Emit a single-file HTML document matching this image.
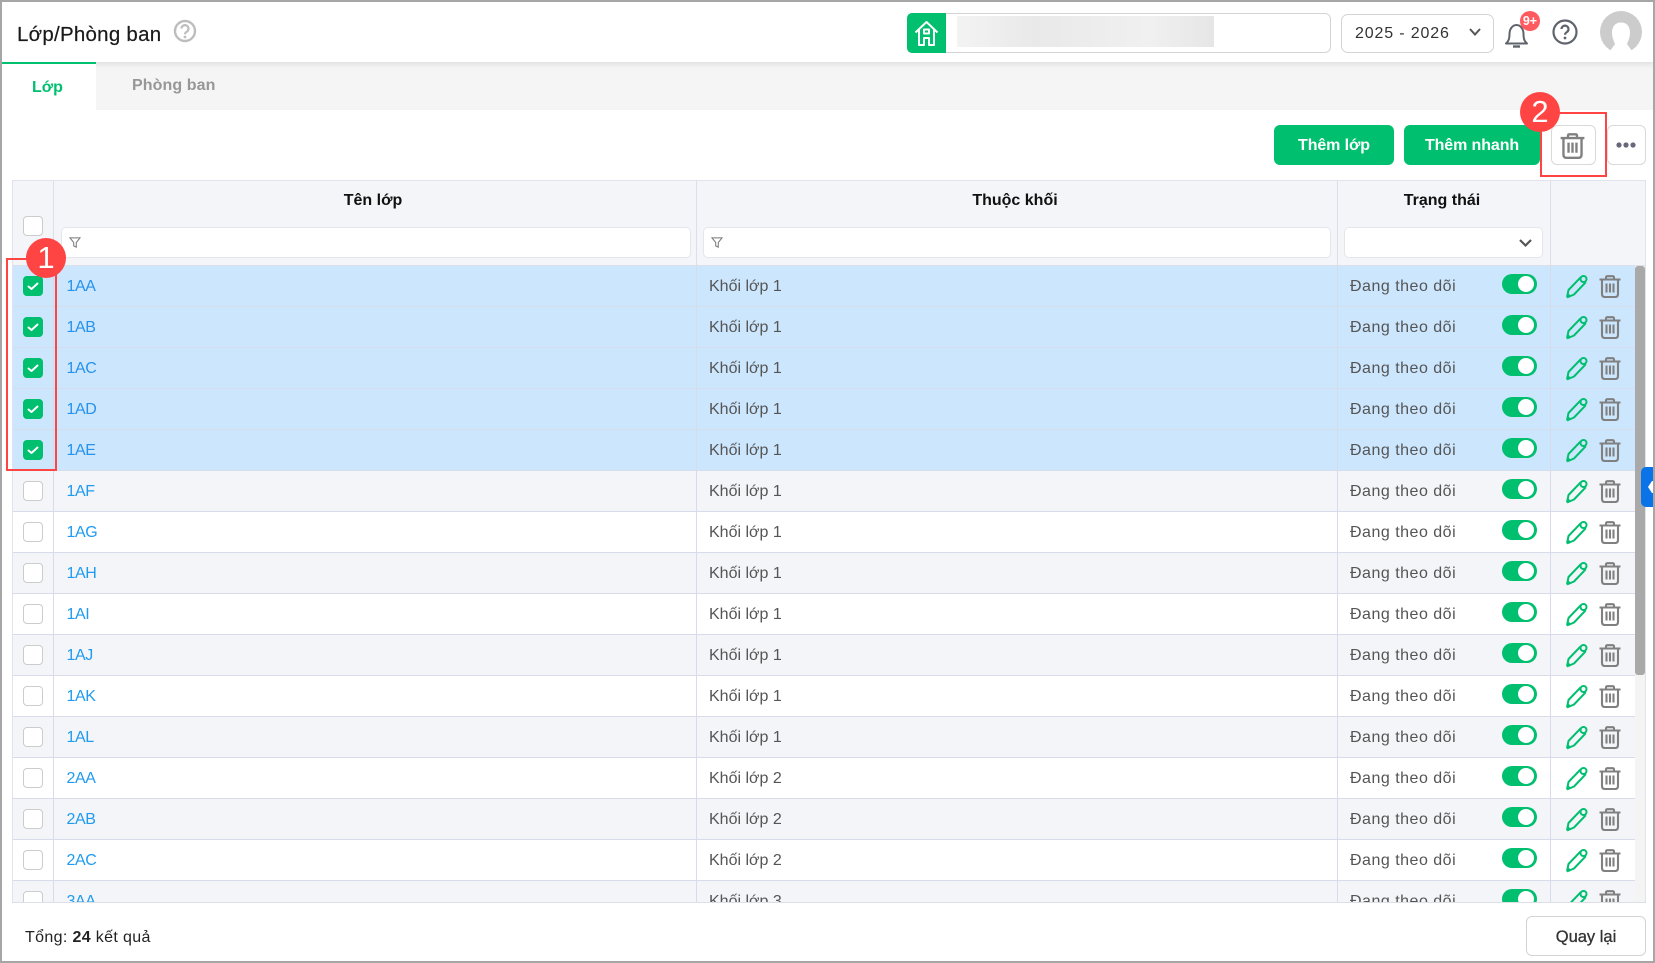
<!DOCTYPE html>
<html><head><meta charset="utf-8"><title>Lớp/Phòng ban</title>
<style>
*{box-sizing:border-box}
html,body{margin:0;padding:0}
body{width:1655px;height:963px;position:relative;overflow:hidden;background:#fff;font-family:"Liberation Sans",sans-serif;font-size:16px;color:#222}
.a{position:absolute}
.frame{position:absolute;left:0;top:0;width:1655px;height:963px;border:2px solid #a6a6a6;pointer-events:none;z-index:20}
.hdr{position:absolute;left:0;top:0;width:1655px;height:62px;background:#fff;box-shadow:0 2px 6px rgba(0,0,0,.1);z-index:3}
.tabs{position:absolute;left:0;top:62px;width:1655px;height:48px;background:#f5f5f5}
.tab{position:absolute;left:2px;top:62px;width:94px;height:48px;background:#fff;border-top:2px solid #00bf6f;z-index:4}
.btn{position:absolute;top:125px;height:40px;border-radius:6px;background:#00bf6f;color:#fff;font-weight:700;text-align:center;line-height:42px;font-size:16px;letter-spacing:-.1px}
.ob{position:absolute;top:125px;height:40px;border:1px solid #d9d9d9;border-radius:6px;background:#fff}
.th{position:absolute;left:12px;top:180px;width:1634px;height:86px;background:#f3f5f9;border:1px solid #e0e3ec;border-bottom:1px solid #dcdfe8}
.vd{position:absolute;top:180px;width:1px;height:86px;background:#dcdfe9}
.tt{position:absolute;top:191px;font-weight:700;font-size:16px;color:#111;text-align:center;line-height:20px;letter-spacing:0}
.in{position:absolute;top:227px;height:31px;background:#fff;border:1px solid #e4e6eb;border-radius:5px}
.rows{position:absolute;left:13px;top:266px;width:1622px;height:636px;overflow:hidden;background:#fff;border-bottom:0}
.r{position:absolute;left:0;width:1622px;height:41px;border-bottom:1px solid #d8dcea;background:#fff;color:#555}
.r.g{background:#f3f5f9}
.r.s{background:#cce6fd;border-bottom-color:#d6deee}
.r:before,.r:after{content:"";position:absolute;top:0;height:41px;width:1px;background:#d8dcea}
.r:before{left:40px}.r:after{left:1324px}
.d2{position:absolute;left:683px;top:0;height:41px;width:1px;background:#d8dcea}
.d3{position:absolute;left:1537px;top:0;height:41px;width:1px;background:#d8dcea}
.c{position:absolute;left:10px;top:10px;width:20px;height:20px;border:1px solid #ccc;border-radius:4px;background:#fff}
.k{background:#00bf6f;border-color:#00bf6f}
.k svg{position:absolute;left:2px;top:3px}
.n{position:absolute;left:53.5px;top:11px;line-height:20px;color:#1f9bf0;letter-spacing:-.4px}
.s .n{color:#2692ec}
.m{position:absolute;left:696px;top:11px;line-height:20px;letter-spacing:0}
.m2{position:absolute;left:1337px;top:11px;line-height:20px;letter-spacing:.5px}
.t{position:absolute;left:1489px;top:8px;width:35px;height:20px;border-radius:10px;background:#00bf6f}
.t:after{content:"";position:absolute;right:3px;top:2px;width:16px;height:16px;border-radius:50%;background:#fff}
.p{position:absolute;left:1552px;top:8px}
.x{position:absolute;left:1585.5px;top:9px}
.red{position:absolute;border:2px solid #f44;z-index:10}
.bd{position:absolute;width:40px;height:40px;border-radius:50%;background:#f44;color:#fff;text-align:center;line-height:40px;font-size:31px;z-index:11}
</style></head>
<body>
<svg width="0" height="0" style="position:absolute">
<symbol id="pen" viewBox="0 0 24 25"><path d="M2 23.500L3.500 16L15.800 3.200M20.800 8.200L9 20.500L2 23.500" fill="none" stroke="#00bf6f" stroke-width="2" stroke-linejoin="round"/><circle cx="18.500" cy="5" r="3" fill="none" stroke="#00bf6f" stroke-width="2"/><path d="M2 23.500L3.500 19.500L6 22Z" fill="#00bf6f"/></symbol>
<symbol id="tr" viewBox="0 0 22 23"><path d="M.5 4.500H21.500M7 4.500V2.500Q7 1.200 8.500 1.200H13.500Q15 1.200 15 2.500V4.500M3 4.500V19Q3 22 6 22H16Q19 22 19 19V4.500M7.500 8.500V17.500M11 8.500V17.500M14.500 8.500V17.500" fill="none" stroke="#808080" stroke-width="2.100"/></symbol>
<symbol id="ck" viewBox="0 0 14 12"><path d="M2.500 6.500L5.500 9L11.500 3.500" fill="none" stroke="#fff" stroke-width="2" stroke-linecap="round" stroke-linejoin="round"/></symbol>
</svg>

<div class="hdr">
<div class="a" style="left:17px;top:22px;font-size:20.500px;line-height:26px;color:#1a1a1a;letter-spacing:.25px;-webkit-text-stroke:.2px #1a1a1a">Lớp/Phòng ban</div>
<svg class="a" style="left:173px;top:19px" width="24" height="24" viewBox="0 0 24 24"><circle cx="12" cy="12" r="10" fill="none" stroke="#bdbdbd" stroke-width="2.400"/><path d="M8.500 9.500a3.500 3.500 0 1 1 5.500 3c-1.300.8-2 1.300-2 2.800" fill="none" stroke="#bdbdbd" stroke-width="2.200"/><circle cx="12" cy="18" r="1.400" fill="#bdbdbd"/></svg>

<div class="a" style="left:907px;top:13px;width:424px;height:40px;border:1px solid #d4d4d4;border-radius:6px;background:#fff"></div>
<div class="a" style="left:907px;top:13px;width:39px;height:40px;background:#00bf6f;border-radius:5px 0 0 5px"></div>
<svg class="a" style="left:914px;top:20px" width="25" height="27" viewBox="0 0 25 27"><path d="M1.500 12.500L12.500 2L23.500 12.500M5 9.500V25H10V18H15V25H20V9.500M10 9.500H15V13.500H10Z" fill="none" stroke="#fff" stroke-width="2" stroke-linejoin="round"/></svg>
<div class="a" style="left:957px;top:16px;width:257px;height:31px;background:linear-gradient(90deg,#f3f3f3,#e9e9e9 30%,#ededed 55%,#f0f0f0 75%,#e6e6e6)"></div>

<div class="a" style="left:1341px;top:14px;width:153px;height:39px;border:1px solid #d4d4d4;border-radius:7px;background:#fff"></div>
<div class="a" style="left:1355px;top:24px;line-height:20px;font-size:16px;color:#333;letter-spacing:.85px">2025 - 2026</div>
<svg class="a" style="left:1468px;top:27px" width="14" height="10" viewBox="0 0 14 10"><path d="M2 2L7 7.500L12 2" fill="none" stroke="#555" stroke-width="2"/></svg>

<svg class="a" style="left:1503px;top:20px" width="27" height="30" viewBox="0 0 27 30"><path d="M3 23.500H24C21 21 20.500 18 20.500 14C20.500 9 17.500 5 13.500 5C9.500 5 6.500 9 6.500 14C6.500 18 6 21 3 23.500Z" fill="none" stroke="#5f646c" stroke-width="2" stroke-linejoin="round"/><path d="M10 26.500H17" stroke="#5f646c" stroke-width="2.400"/></svg>
<div class="a" style="left:1520px;top:11px;width:20px;height:20px;border-radius:50%;background:#ff5a5f;color:#fff;font-size:12.500px;font-weight:700;text-align:center;line-height:20px">9+</div>
<svg class="a" style="left:1552px;top:19px" width="26" height="26" viewBox="0 0 26 26"><circle cx="13" cy="13" r="11.500" fill="none" stroke="#5f646c" stroke-width="2.200"/><path d="M9.500 10a3.500 3.500 0 1 1 5.500 3c-1.300.8-2 1.300-2 2.800" fill="none" stroke="#5f646c" stroke-width="2.200"/><circle cx="13" cy="19" r="1.400" fill="#5f646c"/></svg>
<svg class="a" style="left:1600px;top:11px" width="42" height="42" viewBox="0 0 42 42"><circle cx="21" cy="21" r="21" fill="#ccc"/><path d="M12 22C12 15 15.500 11.500 21 11.500S30 15 30 22C30 27 28 30 27 33L32 40Q27 44 21 44T10 40L15 33C14 30 12 27 12 22Z" fill="#fff"/></svg>
</div>

<div class="tabs"></div>
<div class="tab"></div>
<div class="a" style="left:32px;top:78px;z-index:5;line-height:20px;color:#00bf6f;font-weight:700;font-size:16px">Lớp</div>
<div class="a" style="left:132px;top:76px;line-height:20px;color:#979797;font-weight:700;font-size:16px;letter-spacing:.1px">Phòng ban</div>

<div class="btn" style="left:1274px;width:120px">Thêm lớp</div>
<div class="btn" style="left:1404px;width:136px">Thêm nhanh</div>
<div class="ob" style="left:1551px;width:45px"><svg class="a" style="left:8px;top:7px" width="25" height="26"><use href="#tr"/></svg></div>
<div class="ob" style="left:1607px;width:39px"><svg class="a" style="left:7px;top:15px" width="22" height="8" viewBox="0 0 22 8"><circle cx="4" cy="4" r="2.600" fill="#66677a"/><circle cx="11" cy="4" r="2.600" fill="#66677a"/><circle cx="18" cy="4" r="2.600" fill="#66677a"/></svg></div>

<div class="th"></div>
<div class="vd" style="left:53px"></div><div class="vd" style="left:696px"></div><div class="vd" style="left:1337px"></div><div class="vd" style="left:1550px"></div>
<div class="tt" style="left:53px;width:640px">Tên lớp</div>
<div class="tt" style="left:696px;width:638px">Thuộc khối</div>
<div class="tt" style="left:1338px;width:208px">Trạng thái</div>
<div class="c" style="left:23px;top:216px"></div>
<div class="in" style="left:61px;width:630px"></div>
<div class="in" style="left:703px;width:628px"></div>
<div class="in" style="left:1344px;width:199px"></div>
<svg class="a" style="left:69px;top:237px" width="12" height="11" viewBox="0 0 14 13"><path d="M1 1H13L8.500 6.500V12L5.500 10.500V6.500Z" fill="none" stroke="#777" stroke-width="1.200"/></svg>
<svg class="a" style="left:711px;top:237px" width="12" height="11" viewBox="0 0 14 13"><path d="M1 1H13L8.500 6.500V12L5.500 10.500V6.500Z" fill="none" stroke="#777" stroke-width="1.200"/></svg>
<svg class="a" style="left:1518px;top:238px" width="15" height="10" viewBox="0 0 15 10"><path d="M2 2L7.500 7.500L13 2" fill="none" stroke="#555" stroke-width="2.200"/></svg>

<div class="rows">
<div class="r s" style="top:0"><i class="d2"></i><i class="d3"></i><i class="c k"><svg width="14" height="12"><use href="#ck"/></svg></i><span class="n">1AA</span><span class="m">Khối lớp 1</span><span class="m2">Đang theo dõi</span><i class="t"></i><svg class="p" width="24" height="25"><use href="#pen"/></svg><svg class="x" width="22" height="23"><use href="#tr"/></svg></div>
<div class="r s" style="top:41px"><i class="d2"></i><i class="d3"></i><i class="c k"><svg width="14" height="12"><use href="#ck"/></svg></i><span class="n">1AB</span><span class="m">Khối lớp 1</span><span class="m2">Đang theo dõi</span><i class="t"></i><svg class="p" width="24" height="25"><use href="#pen"/></svg><svg class="x" width="22" height="23"><use href="#tr"/></svg></div>
<div class="r s" style="top:82px"><i class="d2"></i><i class="d3"></i><i class="c k"><svg width="14" height="12"><use href="#ck"/></svg></i><span class="n">1AC</span><span class="m">Khối lớp 1</span><span class="m2">Đang theo dõi</span><i class="t"></i><svg class="p" width="24" height="25"><use href="#pen"/></svg><svg class="x" width="22" height="23"><use href="#tr"/></svg></div>
<div class="r s" style="top:123px"><i class="d2"></i><i class="d3"></i><i class="c k"><svg width="14" height="12"><use href="#ck"/></svg></i><span class="n">1AD</span><span class="m">Khối lớp 1</span><span class="m2">Đang theo dõi</span><i class="t"></i><svg class="p" width="24" height="25"><use href="#pen"/></svg><svg class="x" width="22" height="23"><use href="#tr"/></svg></div>
<div class="r s" style="top:164px"><i class="d2"></i><i class="d3"></i><i class="c k"><svg width="14" height="12"><use href="#ck"/></svg></i><span class="n">1AE</span><span class="m">Khối lớp 1</span><span class="m2">Đang theo dõi</span><i class="t"></i><svg class="p" width="24" height="25"><use href="#pen"/></svg><svg class="x" width="22" height="23"><use href="#tr"/></svg></div>
<div class="r g" style="top:205px"><i class="d2"></i><i class="d3"></i><i class="c"></i><span class="n">1AF</span><span class="m">Khối lớp 1</span><span class="m2">Đang theo dõi</span><i class="t"></i><svg class="p" width="24" height="25"><use href="#pen"/></svg><svg class="x" width="22" height="23"><use href="#tr"/></svg></div>
<div class="r" style="top:246px"><i class="d2"></i><i class="d3"></i><i class="c"></i><span class="n">1AG</span><span class="m">Khối lớp 1</span><span class="m2">Đang theo dõi</span><i class="t"></i><svg class="p" width="24" height="25"><use href="#pen"/></svg><svg class="x" width="22" height="23"><use href="#tr"/></svg></div>
<div class="r g" style="top:287px"><i class="d2"></i><i class="d3"></i><i class="c"></i><span class="n">1AH</span><span class="m">Khối lớp 1</span><span class="m2">Đang theo dõi</span><i class="t"></i><svg class="p" width="24" height="25"><use href="#pen"/></svg><svg class="x" width="22" height="23"><use href="#tr"/></svg></div>
<div class="r" style="top:328px"><i class="d2"></i><i class="d3"></i><i class="c"></i><span class="n">1AI</span><span class="m">Khối lớp 1</span><span class="m2">Đang theo dõi</span><i class="t"></i><svg class="p" width="24" height="25"><use href="#pen"/></svg><svg class="x" width="22" height="23"><use href="#tr"/></svg></div>
<div class="r g" style="top:369px"><i class="d2"></i><i class="d3"></i><i class="c"></i><span class="n">1AJ</span><span class="m">Khối lớp 1</span><span class="m2">Đang theo dõi</span><i class="t"></i><svg class="p" width="24" height="25"><use href="#pen"/></svg><svg class="x" width="22" height="23"><use href="#tr"/></svg></div>
<div class="r" style="top:410px"><i class="d2"></i><i class="d3"></i><i class="c"></i><span class="n">1AK</span><span class="m">Khối lớp 1</span><span class="m2">Đang theo dõi</span><i class="t"></i><svg class="p" width="24" height="25"><use href="#pen"/></svg><svg class="x" width="22" height="23"><use href="#tr"/></svg></div>
<div class="r g" style="top:451px"><i class="d2"></i><i class="d3"></i><i class="c"></i><span class="n">1AL</span><span class="m">Khối lớp 1</span><span class="m2">Đang theo dõi</span><i class="t"></i><svg class="p" width="24" height="25"><use href="#pen"/></svg><svg class="x" width="22" height="23"><use href="#tr"/></svg></div>
<div class="r" style="top:492px"><i class="d2"></i><i class="d3"></i><i class="c"></i><span class="n">2AA</span><span class="m">Khối lớp 2</span><span class="m2">Đang theo dõi</span><i class="t"></i><svg class="p" width="24" height="25"><use href="#pen"/></svg><svg class="x" width="22" height="23"><use href="#tr"/></svg></div>
<div class="r g" style="top:533px"><i class="d2"></i><i class="d3"></i><i class="c"></i><span class="n">2AB</span><span class="m">Khối lớp 2</span><span class="m2">Đang theo dõi</span><i class="t"></i><svg class="p" width="24" height="25"><use href="#pen"/></svg><svg class="x" width="22" height="23"><use href="#tr"/></svg></div>
<div class="r" style="top:574px"><i class="d2"></i><i class="d3"></i><i class="c"></i><span class="n">2AC</span><span class="m">Khối lớp 2</span><span class="m2">Đang theo dõi</span><i class="t"></i><svg class="p" width="24" height="25"><use href="#pen"/></svg><svg class="x" width="22" height="23"><use href="#tr"/></svg></div>
<div class="r g" style="top:615px"><i class="d2"></i><i class="d3"></i><i class="c"></i><span class="n">3AA</span><span class="m">Khối lớp 3</span><span class="m2">Đang theo dõi</span><i class="t"></i><svg class="p" width="24" height="25"><use href="#pen"/></svg><svg class="x" width="22" height="23"><use href="#tr"/></svg></div>
</div>
<div class="a" style="left:12px;top:266px;width:1px;height:636px;background:#e0e3ec"></div>
<div class="a" style="left:1645px;top:180px;width:1px;height:722px;background:#e0e3ec"></div>
<div class="a" style="left:12px;top:902px;width:1634px;height:1px;background:#dcdfe6"></div>
<div class="a" style="left:1635px;top:266px;width:10px;height:636px;background:#f4f4f4"></div>
<div class="a" style="left:1635px;top:266px;width:10px;height:409px;background:#a9a9a9;border-radius:3px"></div>
<div class="a" style="left:1641px;top:467px;width:14px;height:40px;background:#0a73e8;border-radius:5px 0 0 5px"></div>
<svg class="a" style="left:1647px;top:480px" width="8" height="14" viewBox="0 0 8 14"><path d="M5 1L1 7L5 13H8V1Z" fill="#fff"/></svg>

<div class="a" style="left:25px;top:928px;line-height:20px;font-size:16px;color:#222;letter-spacing:.35px">Tổng: <b>24</b> kết quả</div>
<div class="a" style="left:1526px;top:916px;width:120px;height:40px;border:1px solid #d4d4d4;border-radius:6px;background:#fff;text-align:center;line-height:40px;font-size:16.500px;color:#333;-webkit-text-stroke:.3px #333">Quay lại</div>

<div class="red" style="left:6px;top:258px;width:51px;height:213px"></div>
<div class="bd" style="left:26px;top:238px">1</div>
<div class="red" style="left:1540px;top:112px;width:67px;height:65px"></div>
<div class="bd" style="left:1520px;top:92px">2</div>
<div class="frame"></div>
</body></html>
